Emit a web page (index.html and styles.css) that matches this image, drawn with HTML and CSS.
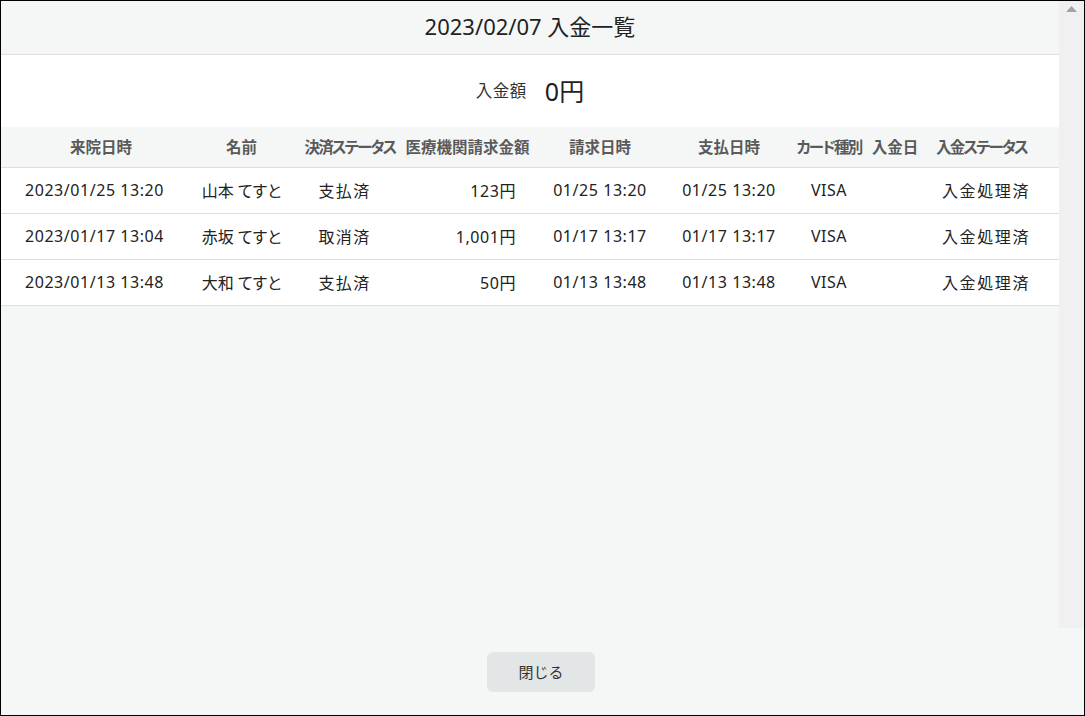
FILE: index.html
```html
<!DOCTYPE html>
<html lang="ja">
<head>
    <meta charset="UTF-8">
    <title>入金一覧</title>
    <link rel="stylesheet" href="styles.css">
</head>
<body>
    <div class="modal">
        <div class="main">
            <div class="pane">
                <!-- Title -->
                <header class="title-bar">
                    <h1>2023/02/07 入金一覧</h1>
                </header>

                <!-- Total amount -->
                <section class="total">
                    <span class="total-label">入金額</span>
                    <span class="total-value">0円</span>
                </section>

                <!-- Deposit list -->
                <table class="deposits">
                    <colgroup>
                        <col class="w-visit">
                        <col class="w-name">
                        <col class="w-pay">
                        <col class="w-amount">
                        <col class="w-bill">
                        <col class="w-paid">
                        <col class="w-card">
                        <col class="w-date">
                        <col class="w-status">
                    </colgroup>
                    <thead>
                        <tr>
                            <th>来院日時</th>
                            <th class="c-name">名前</th>
                            <th class="kana">決済ステータス</th>
                            <th>医療機関請求金額</th>
                            <th>請求日時</th>
                            <th>支払日時</th>
                            <th class="kana">カード種別</th>
                            <th>入金日</th>
                            <th class="kana c-status">入金ステータス</th>
                        </tr>
                    </thead>
                    <tbody>
                        <tr>
                            <td class="c-visit num">2023/01/25 13:20</td>
                            <td class="c-name">山本 てすと</td>
                            <td class="c-pay">支払済</td>
                            <td class="c-amount num">123円</td>
                            <td class="num">01/25 13:20</td>
                            <td class="num">01/25 13:20</td>
                            <td class="num">VISA</td>
                            <td></td>
                            <td class="c-status-d">入金処理済</td>
                        </tr>
                        <tr>
                            <td class="c-visit num">2023/01/17 13:04</td>
                            <td class="c-name">赤坂 てすと</td>
                            <td class="c-pay">取消済</td>
                            <td class="c-amount num">1,001円</td>
                            <td class="num">01/17 13:17</td>
                            <td class="num">01/17 13:17</td>
                            <td class="num">VISA</td>
                            <td></td>
                            <td class="c-status-d">入金処理済</td>
                        </tr>
                        <tr>
                            <td class="c-visit num">2023/01/13 13:48</td>
                            <td class="c-name">大和 てすと</td>
                            <td class="c-pay">支払済</td>
                            <td class="c-amount num">50円</td>
                            <td class="num">01/13 13:48</td>
                            <td class="num">01/13 13:48</td>
                            <td class="num">VISA</td>
                            <td></td>
                            <td class="c-status-d">入金処理済</td>
                        </tr>
                    </tbody>
                </table>
            </div>

            <!-- Scrollbar track -->
            <div class="scrollbar">
                <svg width="11" height="6" viewBox="0 0 11 6"><path d="M0 6 L5.5 0 L11 6 Z" fill="#a3a3a3"/></svg>
            </div>
        </div>

        <footer class="actions">
            <button type="button">閉じる</button>
        </footer>
    </div>
</body>
</html>
```

FILE: styles.css
```css
* {
    margin: 0;
    padding: 0;
    box-sizing: border-box;
}

body {
    font-family: 'Noto Sans', 'Noto Sans CJK JP', sans-serif;
    color: #222;
    background: #fff;
}

.modal {
    height: 716px;
    border: 1px solid #000;
    display: flex;
    flex-direction: column;
    background: #f5f7f7;
}

.main {
    flex: 1;
    display: flex;
    min-height: 0;
}

.pane {
    flex: 1;
    background: #f5f7f7;
}

/* Title */
.title-bar {
    height: 54px;
    border-bottom: 1px solid #dcdede;
    display: flex;
    align-items: center;
    justify-content: center;
    padding-bottom: 3px;
}

.title-bar h1 {
    font-size: 22px;
    font-weight: normal;
    color: #222;
    line-height: 1;
}

/* Total */
.total {
    height: 72px;
    background: #fff;
    display: flex;
    align-items: center;
    justify-content: center;
    gap: 18px;
    padding-bottom: 2px;
}

.total-label {
    font-size: 16.5px;
    color: #333;
    letter-spacing: 0.5px;
}

.total-value {
    font-size: 25px;
    color: #222;
}

/* Table */
.deposits {
    width: 100%;
    table-layout: fixed;
    border-collapse: collapse;
}

.w-visit { width: 200px; }
.w-name { width: 99px; }
.w-pay { width: 100px; }
.w-amount { width: 135px; }
.w-bill { width: 130px; }
.w-paid { width: 128px; }
.w-card { width: 72px; }
.w-date { width: 60px; }
.w-status { width: 134px; }

.deposits th {
    height: 40px;
    font-size: 15.5px;
    font-weight: bold;
    color: #5a5a5a;
    text-align: center;
    white-space: nowrap;
    border-bottom: 1px solid #dcdede;
    background: #f5f7f7;
    padding-bottom: 1px;
    font-feature-settings: "palt";
}

.deposits th.kana {
    letter-spacing: -1.8px;
}

.deposits td {
    height: 46px;
    font-size: 16px;
    color: #222;
    text-align: center;
    white-space: nowrap;
    background: #fff;
    border-bottom: 1px solid #dcdede;
    padding-bottom: 1px;
}

.deposits .num {
    letter-spacing: 0.55px;
}

.deposits .c-visit {
    text-align: left;
    padding-left: 24px;
}

.deposits .c-name {
    padding-right: 18px;
}

.deposits td.c-name {
    font-feature-settings: "palt";
}

.deposits .c-pay {
    padding-right: 11px;
    letter-spacing: 1.4px;
}

.deposits .c-amount {
    text-align: right;
    padding-right: 19px;
}

.deposits .c-status {
    padding-right: 21px;
}

.deposits .c-status-d {
    padding-right: 12px;
    letter-spacing: 1.6px;
}

/* Fake scrollbar */
.scrollbar {
    width: 25px;
    background: #f0f0f0;
    display: flex;
    justify-content: center;
    padding-top: 5px;
}

/* Footer */
.actions {
    height: 87px;
    display: flex;
    align-items: center;
    justify-content: center;
    padding-right: 3px;
}

.actions button {
    width: 108px;
    height: 40px;
    border: none;
    border-radius: 6px;
    background: #e3e6e7;
    color: #333;
    font-family: inherit;
    font-size: 15px;
    cursor: pointer;
}
```
